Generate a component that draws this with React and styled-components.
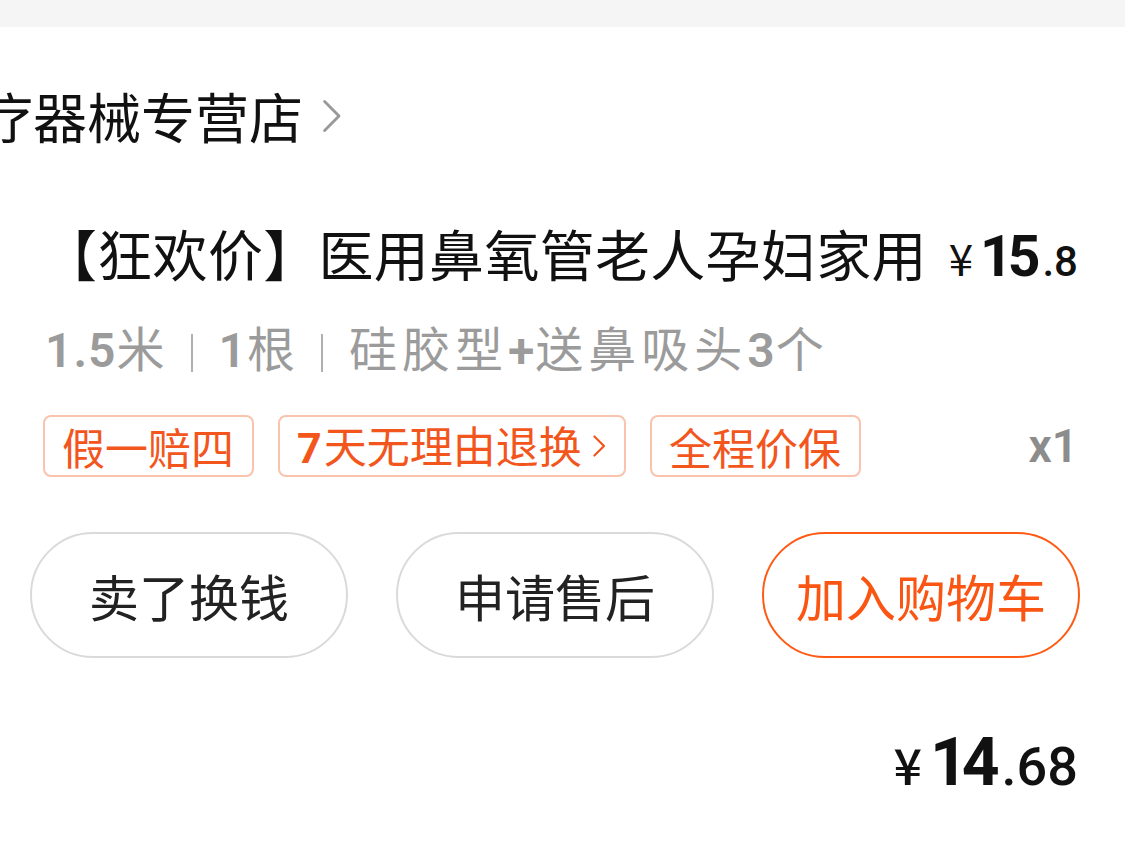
import React from "react";
import styled, { createGlobalStyle } from "styled-components";

const Global = createGlobalStyle`
  html, body { margin: 0; padding: 0; background: #ffffff; }
  body { font-family: "Noto Sans CJK SC", "Noto Sans", sans-serif; overflow: hidden; }
  * { box-sizing: border-box; }
`;

const Page = styled.div`
  width: 1125px;
  height: 843px;
  overflow: hidden;
  background: #ffffff;
  display: flex;
  flex-direction: column;
`;

const TopBar = styled.div`
  height: 27px;
  background: #f5f5f5;
  flex: none;
`;

const Card = styled.div`
  display: flex;
  flex-direction: column;
  padding: 0 47px 0 45px;
`;

const StoreRow = styled.div`
  display: flex;
  align-items: center;
  gap: 18px;
  margin-top: 62px;
  margin-left: -66px;
  height: 54px;
`;

const StoreName = styled.span`
  font-size: 54px;
  line-height: 54px;
  color: #111111;
  white-space: nowrap;
`;

const Chevron = ({ size = 22, color = "#9a9a9a", stroke = 2.2 }) => (
  <svg width={size * 0.6} height={size} viewBox="0 0 12 20" fill="none">
    <path d="M2 2 L10 10 L2 18" stroke={color} strokeWidth={stroke} strokeLinecap="round" strokeLinejoin="round" />
  </svg>
);

const TitleRow = styled.div`
  display: flex;
  align-items: baseline;
  justify-content: space-between;
  margin-top: 80px;
  height: 54px;
`;

const Title = styled.span`
  font-size: 55px;
  line-height: 54px;
  color: #111111;
  white-space: nowrap;
  margin-left: -3px;
  letter-spacing: 0.3px;
`;

const Price = styled.span`
  display: flex;
  align-items: baseline;
  color: #111111;
  font-family: "Roboto", "Noto Sans", sans-serif;
  white-space: nowrap;
`;

const Yen = styled.span`
  font-family: "Noto Sans CJK SC", sans-serif;
  font-size: ${(p) => p.$size}px;
  font-weight: ${(p) => p.$weight || 400};
  margin-right: ${(p) => p.$gap || 6}px;
`;

const Big = styled.span`
  font-size: ${(p) => p.$size}px;
  font-weight: 700;
  letter-spacing: ${(p) => p.$ls || 0}px;
`;

const Small = styled.span`
  font-size: ${(p) => p.$size}px;
  font-weight: 500;
  margin-left: ${(p) => p.$gap || 0}px;
`;

const Spec = styled.div`
  margin-top: 46px;
  font-size: 48px;
  line-height: 46px;
  letter-spacing: 2px;
  color: #9b9b9b;
  white-space: nowrap;
`;

const SpecWide = styled.span`
  letter-spacing: 5px;
`;

const Num = styled.span`
  font-family: "Roboto", sans-serif;
  font-weight: 600;
  letter-spacing: 1px;
`;

const Sep = styled.span`
  display: inline-block;
  width: 2px;
  height: 38px;
  background: #b0b0b0;
  margin: 0 26px 0 24px;
  vertical-align: -5px;
`;

const TagRow = styled.div`
  display: flex;
  align-items: center;
  margin-top: 41px;
  margin-left: -2px;
`;

const Tags = styled.div`
  display: flex;
  gap: 24px;
  flex: 1;
`;

const Tag = styled.span`
  display: inline-flex;
  align-items: center;
  height: 62px;
  padding: 0 18px 0 17px;
  border: 2px solid #f9c3ad;
  border-radius: 8px;
  color: #f2561d;
  font-size: 43px;
  line-height: 42px;
  white-space: nowrap;
`;

const TagArrow = styled.span`
  display: inline-flex;
  margin-left: 10px;
`;

const TagNum = styled.b`
  font-family: "Roboto", sans-serif;
  font-weight: 700;
  margin-right: 2px;
`;

const Qty = styled.span`
  font-family: "Roboto", "Noto Sans", sans-serif;
  font-size: 46px;
  font-weight: 600;
  color: #8c8c8c;
`;

const ButtonRow = styled.div`
  display: flex;
  gap: 48px;
  margin-top: 55px;
  margin-left: -15px;
  margin-right: -3px;
`;

const Button = styled.button`
  width: 318px;
  height: 126px;
  border-radius: 63px;
  background: #ffffff;
  border: 2px solid ${(p) => (p.$primary ? "#ff5a14" : "#dadada")};
  color: ${(p) => (p.$primary ? "#fa5512" : "#222222")};
  font-family: "Noto Sans CJK SC", sans-serif;
  font-size: 50px;
  padding: 0;
  display: flex;
  align-items: center;
  justify-content: center;
`;

const Total = styled.div`
  display: flex;
  justify-content: flex-end;
  margin-top: 66px;
`;

export default function App() {
  return (
    <Page>
      <Global />
      <TopBar />
      <Card>
        <StoreRow>
          <StoreName>疗器械专营店</StoreName>
          <Chevron size={36} stroke={1.6} color="#999" />
        </StoreRow>
        <TitleRow>
          <Title>【狂欢价】医用鼻氧管老人孕妇家用</Title>
          <Price>
            <Yen $size={44} $gap={7}>¥</Yen>
            <Big $size={57} $ls={-5}>15</Big>
            <Small $size={42} $gap={7}>.8</Small>
          </Price>
        </TitleRow>
        <Spec>
          <Num>1.5</Num>米<Sep /><Num>1</Num>根<Sep />
          <SpecWide>
            硅胶型<Num>+</Num>送鼻吸头<Num>3</Num>个
          </SpecWide>
        </Spec>
        <TagRow>
          <Tags>
            <Tag>假一赔四</Tag>
            <Tag>
              <span>
                <TagNum>7</TagNum>天无理由退换
              </span>
              <TagArrow>
                <Chevron size={24} stroke={1.8} color="#f2561d" />
              </TagArrow>
            </Tag>
            <Tag>全程价保</Tag>
          </Tags>
          <Qty>x1</Qty>
        </TagRow>
        <ButtonRow>
          <Button>卖了换钱</Button>
          <Button>申请售后</Button>
          <Button $primary>加入购物车</Button>
        </ButtonRow>
        <Total>
          <Price>
            <Yen $size={50} $weight={500} $gap={8}>¥</Yen>
            <Big $size={66} $ls={-6}>14</Big>
            <Small $size={54} $gap={8}>.68</Small>
          </Price>
        </Total>
      </Card>
    </Page>
  );
}
